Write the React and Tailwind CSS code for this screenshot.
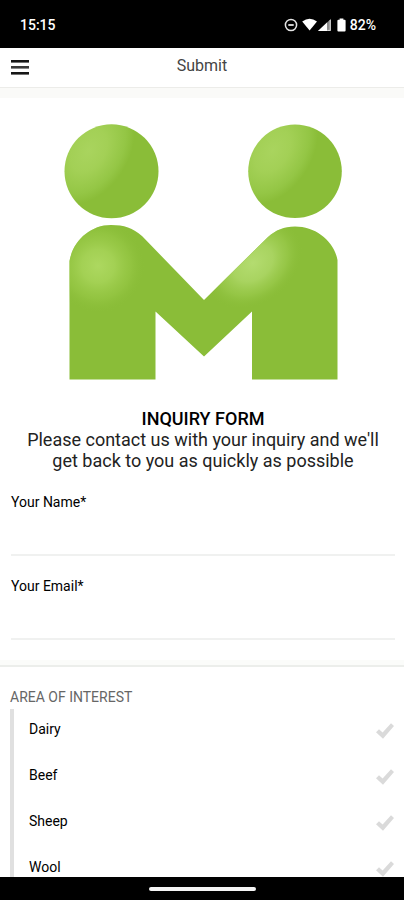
import React, { useState } from 'react';

const interests = ['Dairy', 'Beef', 'Sheep', 'Wool'];

function StatusBar() {
  return (
    <div className="h-12 shrink-0 flex items-center justify-between pl-5 pr-7 pt-px bg-black text-white">
      <span className="text-sm leading-5 font-medium">15:15</span>
      <div className="flex items-center gap-1">
        <svg viewBox="0 0 14 14" className="w-[14px] h-[14px]" fill="none" stroke="#e5e5e5">
          <circle cx="7" cy="7" r="5.6" strokeWidth="1.5" />
          <path d="M4.3 7h5.4" strokeWidth="1.8" />
        </svg>
        <svg viewBox="0 0 31 14" className="w-[31px] h-[14px]" fill="#fff">
          <path d="M0.2 3.6Q7.600-2 15 3.600L7.600 12.600Z" />
          <path d="M16 13L29 0.8V13Z" fill="#8c8c8c" />
          <path d="M16 13L25 4.5V13Z" />
          <path d="M28.2 2v10.4h-3" fill="none" stroke="#ddd" />
        </svg>
        <svg viewBox="0 0 9 14" className="w-[9px] h-[14px]" fill="#fff">
          <path d="M2.6 0.4h3.8v1.4h1.2q1 0 1 1v9.8q0 1-1 1H1.4q-1 0-1-1V2.8q0-1 1-1h1.2Z" />
        </svg>
        <span className="text-sm leading-5 font-medium">82%</span>
      </div>
    </div>
  );
}

function Header() {
  return (
    <header className="h-10 shrink-0 grid grid-cols-[40px_1fr_40px] items-center border-b border-[#ecece9] bg-white">
      <button type="button" aria-label="Menu" className="pl-[11px] cursor-pointer">
        <svg viewBox="0 0 18 15" className="w-[18px] h-[15px]" fill="#161616">
          <rect width="18" height="2.6" y="0" />
          <rect width="18" height="2.6" y="6" fill="#3a3a3a" />
          <rect width="18" height="2.6" y="12" />
        </svg>
      </button>
      <h1 className="pb-1 text-center text-base leading-5 text-[#444]">Submit</h1>
    </header>
  );
}

function Logo() {
  return (
    <svg viewBox="64 124 278 256" className="w-[278px] h-[256px] mx-auto">
      <defs>
        <radialGradient id="head" cx="0" cy="0" r="1" gradientTransform="translate(0.26 0.28) rotate(-58) scale(0.62 0.42)">
          <stop offset="0" stopColor="#a9d45e" />
          <stop offset="0.4" stopColor="#a3d056" />
          <stop offset="0.8" stopColor="#94c645" />
          <stop offset="1" stopColor="#8abd38" />
        </radialGradient>
        <radialGradient id="leftGlow" gradientUnits="userSpaceOnUse" cx="98" cy="266" r="47">
          <stop offset="0" stopColor="#add860" />
          <stop offset="0.35" stopColor="#a6d357" stopOpacity="0.9" />
          <stop offset="0.7" stopColor="#9bcb49" stopOpacity="0.5" />
          <stop offset="1" stopColor="#8abd38" stopOpacity="0" />
        </radialGradient>
        <radialGradient
          id="rightGlow"
          gradientUnits="userSpaceOnUse"
          cx="0"
          cy="0"
          r="1"
          gradientTransform="translate(253 263) rotate(-38) scale(54 41)"
        >
          <stop offset="0" stopColor="#b4dc70" />
          <stop offset="0.4" stopColor="#acd665" stopOpacity="0.9" />
          <stop offset="0.7" stopColor="#9dcc4f" stopOpacity="0.6" />
          <stop offset="1" stopColor="#8abd38" stopOpacity="0" />
        </radialGradient>
        <path
          id="body"
          d="M69.5 379.5V261C73 241 90 225 111 225C124 225 133 228 142 236L204 300L268 237C276 230 284 226.5 295 226.5C316 226.5 334 241 337.5 260V379.5H252V311.5L204 356.5L155.5 311.5V379.5Z"
        />
      </defs>
      <circle cx="111.5" cy="171.3" r="47" fill="url(#head)" />
      <circle cx="295" cy="171.3" r="46.8" fill="url(#head)" />
      <use href="#body" fill="#8abd38" />
      <use href="#body" fill="url(#leftGlow)" />
      <use href="#body" fill="url(#rightGlow)" />
    </svg>
  );
}

function Field({ id, label, type, value, onChange }) {
  return (
    <div className="pb-5">
      <label htmlFor={id} className="block text-sm leading-5 text-black">
        {label}
      </label>
      <input
        type={type}
        id={id}
        value={value}
        onChange={(e) => onChange(e.target.value)}
        className="block w-full h-11 border-b-2 border-[#f0f1f0] bg-transparent text-base focus:outline-none"
        required
      />
    </div>
  );
}

function InterestRow({ name }) {
  return (
    <label className="h-[46px] flex items-start justify-between pt-3 pl-[15px] cursor-pointer">
      <span className="text-sm leading-4 text-black">{name}</span>
      <input type="checkbox" className="peer sr-only" />
      <svg viewBox="0 0 18 16" className="w-[18px] h-4 mt-[2px] text-[#dadada] peer-checked:text-[#8abd38]" fill="currentColor">
        <path d="M0 9.2L3 6.2L6.6 9.6L15 0.3L18 3L7 15.8Z" />
      </svg>
    </label>
  );
}

function App() {
  const [name, setName] = useState('');
  const [email, setEmail] = useState('');

  return (
    <div className="h-screen flex flex-col overflow-hidden bg-white font-[Roboto,sans-serif]">
      <StatusBar />
      <Header />

      <main className="flex-1 min-h-0 overflow-hidden">
        <div className="h-[10px] bg-[#fafaf8]" />
        <form>
          <div className="pt-[26px] pl-[11px] pr-[9px]">
            <Logo />
            <div className="pt-7 pb-[21px] px-3 text-center text-lg leading-[21px] text-[#222]">
              <h2 className="font-medium text-black">INQUIRY FORM</h2>
              <p>Please contact us with your inquiry and we'll get back to you as quickly as possible</p>
            </div>
            <Field id="name" label="Your Name*" type="text" value={name} onChange={setName} />
            <Field id="email" label="Your Email*" type="email" value={email} onChange={setEmail} />
          </div>
          <div className="h-[5px] bg-[#fbfcfa]" />

          <fieldset className="px-[10px] pt-5 border-t-2 border-[#eceeeb]">
            <legend className="float-left w-full pb-[2px] text-sm leading-5 text-[#666]">AREA OF INTEREST</legend>
            <div className="clear-both border-l-4 border-[#e0e0e0]">
              {interests.map((item) => (
                <InterestRow key={item} name={item} />
              ))}
            </div>
          </fieldset>
        </form>
      </main>

      <div className="h-[23px] shrink-0 flex items-center justify-center bg-black">
        <div className="w-[107px] h-1 rounded-full bg-[#f5f5f5]" />
      </div>
    </div>
  );
}

export default App;
